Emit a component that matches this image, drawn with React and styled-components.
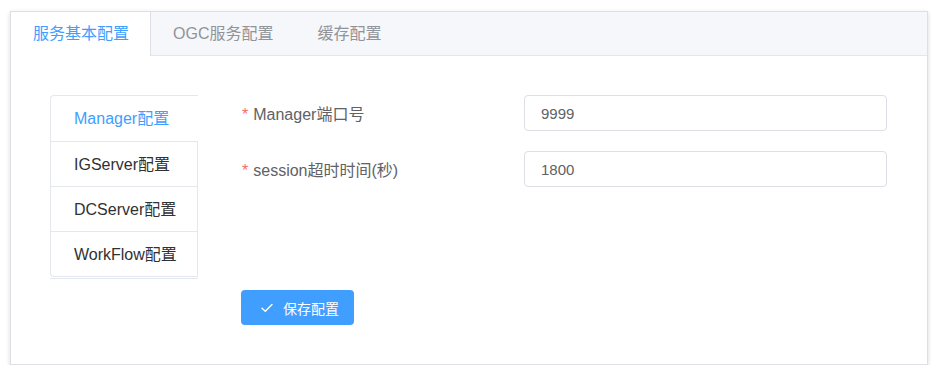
import React, { useState } from "react";
import styled, { createGlobalStyle } from "styled-components";

const GlobalStyle = createGlobalStyle`
  * { box-sizing: border-box; }
  html, body { margin: 0; padding: 0; background: #fff; }
  body { font-family: "Liberation Sans", "Noto Sans CJK SC", sans-serif; }
`;

const FONT = `"Liberation Sans", "Noto Sans CJK SC", sans-serif`;

const Page = styled.div`
  padding: 11px 10px 0 10px;
`;

const Card = styled.div`
  border: 1px solid #dcdfe6;
  background: #fff;
  box-shadow: 0 2px 4px 0 rgba(0, 0, 0, 0.12), 0 0 6px 0 rgba(0, 0, 0, 0.04);
`;

const TabsHeader = styled.div`
  display: flex;
  align-items: flex-start;
  height: 44px;
  background: #f5f7fa;
  border-bottom: 1px solid #e4e7ed;
`;

const Tab = styled.div`
  height: 44px;
  margin-bottom: -1px;
  line-height: 44px;
  padding: ${(p) => (p.$first ? "0 21px 0 22px" : "0 21px")};
  font-size: 16px;
  font-family: ${FONT};
  color: ${(p) => (p.$active ? "#409eff" : "#909399")};
  background: ${(p) => (p.$active ? "#fff" : "transparent")};
  border-left: ${(p) => (p.$first ? "none" : "1px solid transparent")};
  border-right: 1px solid ${(p) => (p.$active ? "#dcdfe6" : "transparent")};
  cursor: pointer;
  white-space: nowrap;
`;

const Body = styled.div`
  display: flex;
  align-items: flex-start;
  gap: 43px;
  padding: 39px 40px 39px 39px;
`;

const SideNav = styled.div`
  width: 148px;
  flex: none;
  padding-bottom: 1px;
  border-bottom: 1px solid #e4e7ed;
`;

const SideList = styled.div`
  border: 1px solid #e4e7ed;
  border-right: none;
  border-radius: 4px 0 0 4px;
`;

const SideItem = styled.div`
  height: 45px;
  line-height: 45px;
  padding-left: 23px;
  font-size: 16px;
  font-family: ${FONT};
  color: ${(p) => (p.$active ? "#409eff" : "#303133")};
  border-right: 1px solid ${(p) => (p.$active ? "transparent" : "#e4e7ed")};
  cursor: pointer;
  white-space: nowrap;
  & + & {
    border-top: 1px solid #e4e7ed;
  }
`;

const Form = styled.div`
  flex: 1;
  display: flex;
  flex-direction: column;
`;

const FormItem = styled.div`
  display: flex;
  align-items: center;
  height: 36px;
  & + & {
    margin-top: 20px;
  }
`;

const Label = styled.label`
  width: 283px;
  flex: none;
  padding-left: 1px;
  font-size: 16px;
  font-family: ${FONT};
  color: #606266;
  white-space: nowrap;
`;

const Required = styled.span`
  color: #f56c6c;
  margin-right: 5px;
`;

const Input = styled.input`
  flex: 1;
  min-width: 0;
  height: 36px;
  border: 1px solid #dcdfe6;
  border-radius: 4px;
  padding: 0 15px 0 16px;
  font-size: 15px;
  font-family: ${FONT};
  color: #606266;
  background: #fff;
  outline: none;
`;

const Actions = styled.div`
  margin-top: 103px;
`;

const Button = styled.button`
  display: inline-flex;
  align-items: center;
  gap: 10px;
  width: 113px;
  height: 35px;
  padding: 0 0 0 20px;
  border: none;
  border-radius: 4px;
  background: #409eff;
  color: #fff;
  font-size: 14px;
  font-family: ${FONT};
  cursor: pointer;
`;

const CheckIcon = () => (
  <svg width="12" height="12" viewBox="0 0 12 12" fill="none">
    <polyline
      points="1,6.2 4.3,9.3 11,2.6"
      stroke="#fff"
      strokeWidth="1.4"
      strokeLinecap="round"
      strokeLinejoin="round"
    />
  </svg>
);

const topTabs = ["服务基本配置", "OGC服务配置", "缓存配置"];
const sideTabs = ["Manager配置", "IGServer配置", "DCServer配置", "WorkFlow配置"];

export default function App() {
  const [top, setTop] = useState(0);
  const [side, setSide] = useState(0);
  const [port, setPort] = useState("9999");
  const [timeout, setTimeoutVal] = useState("1800");

  return (
    <>
      <GlobalStyle />
      <Page>
        <Card>
          <TabsHeader>
            {topTabs.map((t, i) => (
              <Tab key={t} $first={i === 0} $active={i === top} onClick={() => setTop(i)}>
                {t}
              </Tab>
            ))}
          </TabsHeader>
          <Body>
            <SideNav>
              <SideList>
                {sideTabs.map((t, i) => (
                  <SideItem key={t} $active={i === side} onClick={() => setSide(i)}>
                    {t}
                  </SideItem>
                ))}
              </SideList>
            </SideNav>
            <Form>
              <FormItem>
                <Label>
                  <Required>*</Required>Manager端口号
                </Label>
                <Input value={port} onChange={(e) => setPort(e.target.value)} />
              </FormItem>
              <FormItem>
                <Label>
                  <Required>*</Required>session超时时间(秒)
                </Label>
                <Input value={timeout} onChange={(e) => setTimeoutVal(e.target.value)} />
              </FormItem>
              <Actions>
                <Button type="button">
                  <CheckIcon />
                  <span>保存配置</span>
                </Button>
              </Actions>
            </Form>
          </Body>
        </Card>
      </Page>
    </>
  );
}
